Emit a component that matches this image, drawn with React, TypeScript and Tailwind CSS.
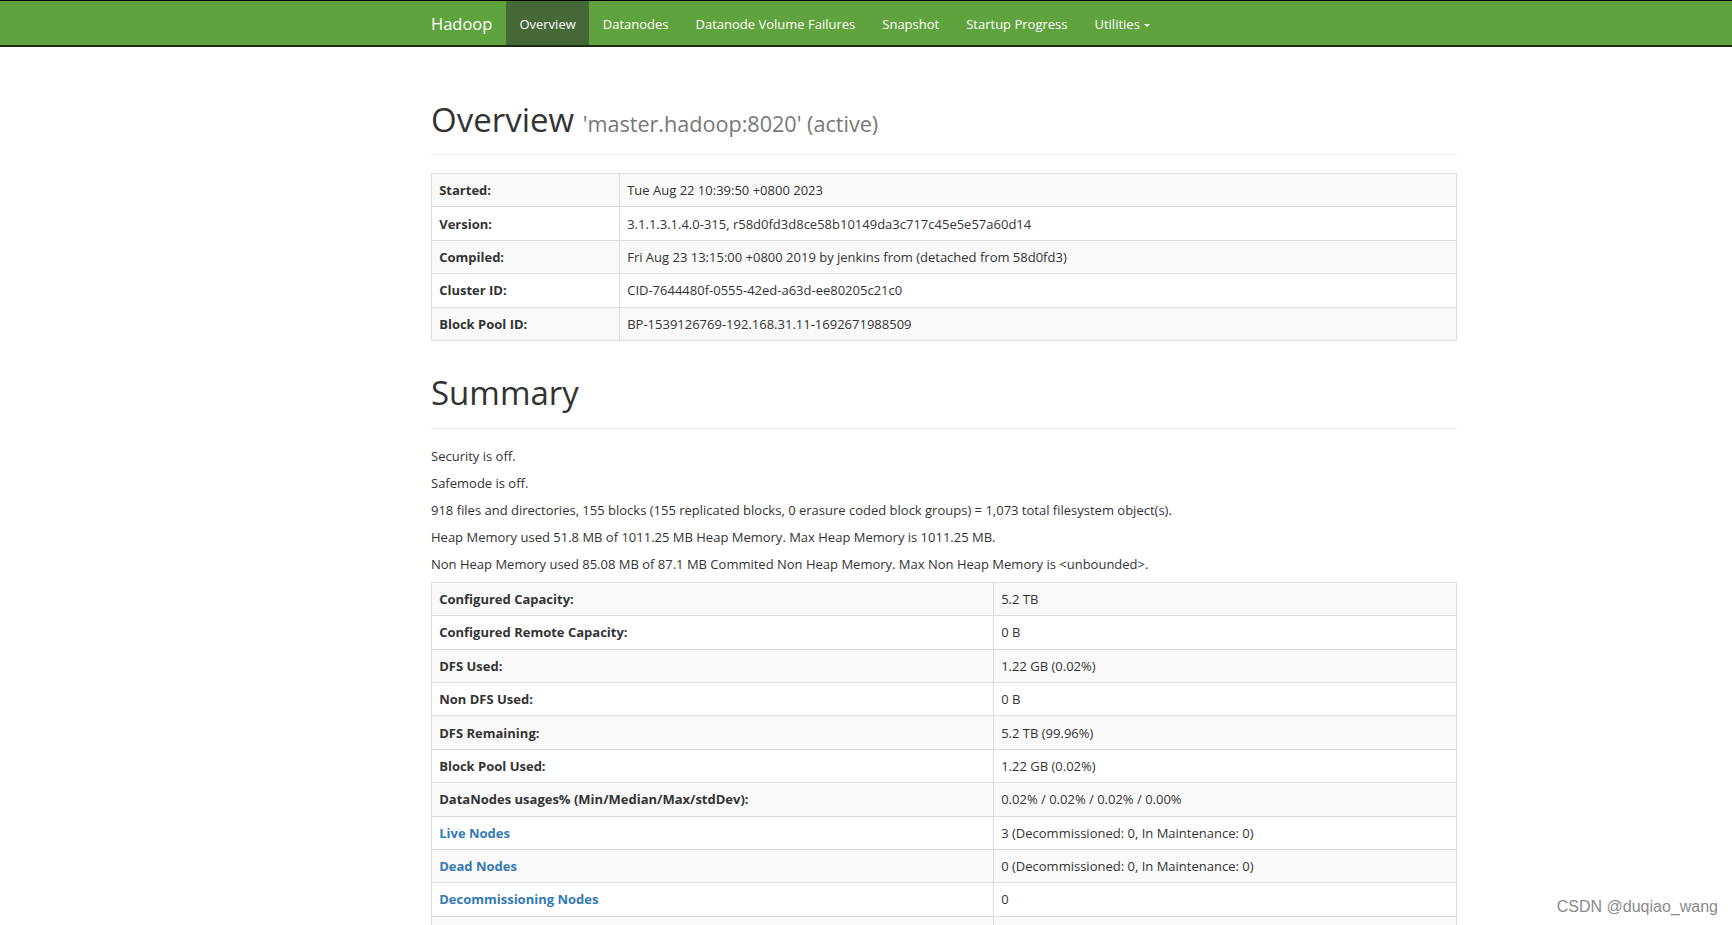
import { useState } from 'react';

type Row = { label: string; value: string; link?: boolean };

const overviewRows: Row[] = [
  { label: 'Started:', value: 'Tue Aug 22 10:39:50 +0800 2023' },
  { label: 'Version:', value: '3.1.1.3.1.4.0-315, r58d0fd3d8ce58b10149da3c717c45e5e57a60d14' },
  { label: 'Compiled:', value: 'Fri Aug 23 13:15:00 +0800 2019 by jenkins from (detached from 58d0fd3)' },
  { label: 'Cluster ID:', value: 'CID-7644480f-0555-42ed-a63d-ee80205c21c0' },
  { label: 'Block Pool ID:', value: 'BP-1539126769-192.168.31.11-1692671988509' },
];

const summaryRows: Row[] = [
  { label: 'Configured Capacity:', value: '5.2 TB' },
  { label: 'Configured Remote Capacity:', value: '0 B' },
  { label: 'DFS Used:', value: '1.22 GB (0.02%)' },
  { label: 'Non DFS Used:', value: '0 B' },
  { label: 'DFS Remaining:', value: '5.2 TB (99.96%)' },
  { label: 'Block Pool Used:', value: '1.22 GB (0.02%)' },
  { label: 'DataNodes usages% (Min/Median/Max/stdDev):', value: '0.02% / 0.02% / 0.02% / 0.00%' },
  { label: 'Live Nodes', value: '3 (Decommissioned: 0, In Maintenance: 0)', link: true },
  { label: 'Dead Nodes', value: '0 (Decommissioned: 0, In Maintenance: 0)', link: true },
  { label: 'Decommissioning Nodes', value: '0', link: true },
  { label: 'Entering Maintenance Nodes', value: '0', link: true },
  { label: 'Total Datanode Volume Failures', value: '0 (0 B)', link: true },
  { label: 'Number of Under-Replicated Blocks', value: '0' },
];

const navItems = ['Overview', 'Datanodes', 'Datanode Volume Failures', 'Snapshot', 'Startup Progress'];

const InfoTable = ({ rows, labelWidth }: { rows: Row[]; labelWidth: string }) => (
  <table className="w-full border-collapse border border-[#ddd] text-[13px] leading-[18px]">
    <tbody>
      {rows.map((r, i) => (
        <tr key={r.label} className={i % 2 === 0 ? 'bg-[#f9f9f9]' : 'bg-white'}>
          <th className={`${labelWidth} border border-[#ddd] px-[7.2px] py-[7.2px] text-left font-bold`}>
            {r.link ? <a className="text-[#337ab7] cursor-pointer">{r.label}</a> : r.label}
          </th>
          <td className="border border-[#ddd] px-[7.2px] py-[7.2px]">{r.value}</td>
        </tr>
      ))}
    </tbody>
  </table>
);

const App = () => {
  const [active, setActive] = useState('Overview');

  return (
    <div className="relative min-h-[925px] bg-white text-[#333] font-['Open_Sans','Noto_Sans',sans-serif]">
      <nav className="h-[47px] bg-[#5fa33e] border-t border-black border-b-2 border-b-[#1d2b14]">
        <div className="ml-[431px] flex h-[44px] items-stretch text-[13px]">
          <span className="flex items-center pt-[3px] pr-[13.5px] text-[16.5px] text-white">Hadoop</span>
          {navItems.map((n) => (
            <a
              key={n}
              onClick={() => setActive(n)}
              className={`flex items-center pt-[3px] px-[13.5px] text-white cursor-pointer ${active === n ? 'bg-[#466836]' : ''}`}
            >
              {n}
            </a>
          ))}
          <a className="flex items-center gap-[4px] pt-[3px] px-[13.5px] text-white cursor-pointer">
            Utilities
            <span className="mt-[2px] inline-block border-x-[3.5px] border-t-[3.5px] border-x-transparent border-t-white" />
          </a>
        </div>
      </nav>

      <main className="ml-[431px] w-[1026px]">
        <div className="mt-[55px] mb-[18px] border-b border-[#eee] pb-[8px]">
          <h1 className="mb-[8px] text-[33px] leading-[36px] font-normal">
            Overview{' '}
            <small className="text-[21.6px] leading-none text-[#777]">'master.hadoop:8020' (active)</small>
          </h1>
        </div>

        <InfoTable rows={overviewRows} labelWidth="w-[188px]" />

        <div className="mt-[34px] mb-[18px] border-b border-[#eee] pb-[8px]">
          <h1 className="mb-[9px] text-[33px] leading-[36px] font-normal">Summary</h1>
        </div>

        <div className="flex flex-col gap-[9px] text-[13px] leading-[18px]">
          <p>Security is off.</p>
          <p>Safemode is off.</p>
          <p>918 files and directories, 155 blocks (155 replicated blocks, 0 erasure coded block groups) = 1,073 total filesystem object(s).</p>
          <p>Heap Memory used 51.8 MB of 1011.25 MB Heap Memory. Max Heap Memory is 1011.25 MB.</p>
          <p>Non Heap Memory used 85.08 MB of 87.1 MB Commited Non Heap Memory. Max Non Heap Memory is &lt;unbounded&gt;.</p>
        </div>

        <div className="mt-[9px]">
          <InfoTable rows={summaryRows} labelWidth="w-[562px]" />
        </div>
      </main>

      <div className="absolute right-[14px] top-[895px] text-[16px] text-[#8a8a8a] font-['Liberation_Sans',sans-serif]">
        CSDN @duqiao_wang
      </div>
    </div>
  );
};

export default App;
